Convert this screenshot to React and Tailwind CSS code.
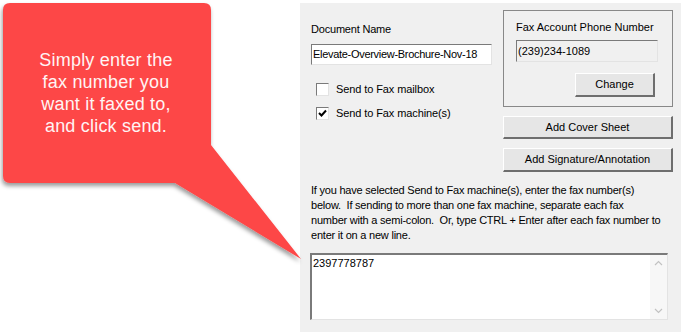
import React from "react";

const ui = { fontFamily: '"Liberation Sans", Arial, sans-serif' };

function Check({ checked }) {
  return (
    <div className="w-[13px] h-[13px] bg-white border-t border-l border-t-[#7a7a7a] border-l-[#7a7a7a] border-b border-r border-b-[#e3e3e3] border-r-[#e3e3e3] flex items-center justify-center">
      {checked && (
        <svg width="9" height="9" viewBox="0 0 9 9">
          <path d="M1 4 L3.5 6.5 L8 1.5" stroke="#000" strokeWidth="2" fill="none" />
        </svg>
      )}
    </div>
  );
}

function Btn({ children, className }) {
  return (
    <div
      className={
        "bg-[#e6e6e6] border-t border-l border-t-white border-l-white border-b-2 border-r-2 border-b-[#6e6e6e] border-r-[#6e6e6e] flex items-center justify-center text-[11px] text-black " +
        className
      }
    >
      {children}
    </div>
  );
}

export default function App() {
  return (
    <div className="w-[681px] h-[332px] flex bg-white overflow-hidden" style={ui}>
      <div className="w-[300px] shrink-0 relative">
        <svg className="absolute left-0 top-0 overflow-visible" width="300" height="332" viewBox="0 0 300 332">
          <defs>
            <filter id="sh" x="-20%" y="-20%" width="140%" height="140%">
              <feDropShadow dx="-1" dy="3" stdDeviation="2.2" floodColor="#000" floodOpacity="0.4" />
            </filter>
          </defs>
          <path
            d="M10 3 H204 Q211 3 211 10 V145 L301 259 L175 183 H10 Q3 183 3 176 V10 Q3 3 10 3 Z"
            fill="#fd4747"
            filter="url(#sh)"
          />
        </svg>
        <div className="relative w-[212px] pt-[49px] text-center text-[#fff4f4] text-[18px] leading-[22px] tracking-[0.2px]">
          Simply enter the<br />fax number you<br />want it faxed to,<br />and click send.
        </div>
      </div>

      <div className="flex-1 mt-[3px] bg-[#f0f0f0] pl-[11px] pr-[8px] flex flex-col text-black">
        <div className="flex gap-[11px]">
          <div className="w-[181px] pt-[20px] flex flex-col">
            <div className="text-[11px] leading-[13px] h-[13px] tracking-[-0.2px]">Document Name</div>
            <div className="mt-[8px] h-[21px] bg-white border-t border-l border-t-[#7a7a7a] border-l-[#7a7a7a] border-b border-r border-b-[#e3e3e3] border-r-[#e3e3e3] flex items-center pl-[1px] text-[11px] tracking-[-0.3px] whitespace-nowrap overflow-hidden">
              Elevate-Overview-Brochure-Nov-18
            </div>
            <div className="mt-[18px] flex items-center gap-[7px] pl-[5px] h-[13px]">
              <Check />
              <span className="text-[11px] tracking-[-0.1px]">Send to Fax mailbox</span>
            </div>
            <div className="mt-[11px] flex items-center gap-[7px] pl-[5px] h-[13px]">
              <Check checked />
              <span className="text-[11px] tracking-[-0.1px]">Send to Fax machine(s)</span>
            </div>
          </div>

          <div className="w-[170px] pt-[7px] flex flex-col">
            <div className="h-[97px] border border-[#888888] flex flex-col pl-[12px] pt-[10px]">
              <div className="text-[11px] leading-[13px] h-[13px] whitespace-nowrap">Fax Account Phone Number</div>
              <div className="mt-[6px] w-[142px] h-[22px] bg-[#f0f0f0] border-t border-l border-t-[#7a7a7a] border-l-[#7a7a7a] border-b border-r border-b-[#e3e3e3] border-r-[#e3e3e3] flex items-center pl-[1px] text-[11px]">
                (239)234-1089
              </div>
              <div className="mt-[11px] flex">
                <Btn className="ml-[59px] w-[80px] h-[24px]">Change</Btn>
              </div>
            </div>
            <Btn className="mt-[9px] h-[23px]">Add Cover Sheet</Btn>
            <Btn className="mt-[9px] h-[24px]">Add Signature/Annotation</Btn>
          </div>
        </div>

        <div className="mt-[11px] text-[11px] leading-[15px] whitespace-pre tracking-[-0.22px]">
          {"If you have selected Send to Fax machine(s), enter the fax number(s)\nbelow.  If sending to more than one fax machine, separate each fax\nnumber with a semi-colon.  Or, type CTRL + Enter after each fax number to\nenter it on a new line."}
        </div>

        <div className="mt-[10px] -ml-[1px] w-[358px] h-[67px] bg-white border-t-2 border-l-2 border-t-[#7a7a7a] border-l-[#7a7a7a] border-b border-r border-b-[#e3e3e3] border-r-[#e3e3e3] flex">
          <div className="flex-1 text-[11px] leading-[13px] pl-[1px] pt-[2px]">2397778787</div>
          <div className="w-[17px] bg-[#f7f7f7] flex flex-col items-center justify-between py-[5px]">
            <svg width="9" height="6" viewBox="0 0 9 6">
              <path d="M1 5 L4.5 1.5 L8 5" stroke="#c2c2c2" strokeWidth="1.2" fill="none" />
            </svg>
            <svg width="9" height="6" viewBox="0 0 9 6">
              <path d="M1 1 L4.5 4.5 L8 1" stroke="#c2c2c2" strokeWidth="1.2" fill="none" />
            </svg>
          </div>
        </div>
      </div>
    </div>
  );
}
